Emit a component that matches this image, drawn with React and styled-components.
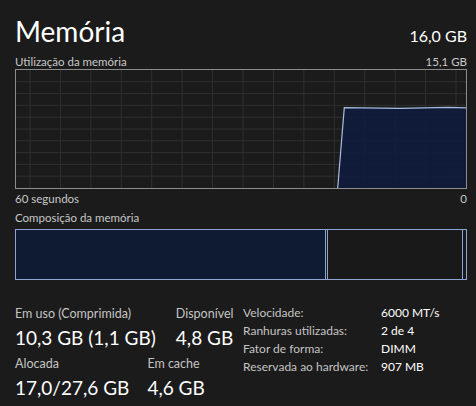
import styled, { createGlobalStyle } from 'styled-components'

const GlobalStyle = createGlobalStyle`
  html, body {
    margin: 0;
    background: #1b1b1b;
  }
  body {
    font-family: Lato, 'Open Sans', sans-serif;
    color: #ffffff;
  }
`

const Page = styled.div`
  width: 476px;
  height: 406px;
  box-sizing: border-box;
  padding: 12px 9px 0 15px;
  display: flex;
  flex-direction: column;
`

const Header = styled.div`
  display: flex;
  justify-content: space-between;
  align-items: baseline;
`

const Title = styled.h1`
  margin: 0;
  font-size: 28px;
  font-weight: 400;
  line-height: 38px;
`

const Total = styled.span`
  font-size: 16px;
`

const Caption = styled.div`
  display: flex;
  justify-content: space-between;
  font-size: 11.5px;
  line-height: 15px;
  color: #c8c8c8;
  margin-top: ${props => props.$top || 0}px;
`

const Graph = styled.div`
  height: 120px;
  box-sizing: border-box;
  border: 1px solid #8c8c8c;
  svg {
    display: block;
  }
`

const Bar = styled.div`
  display: flex;
  height: 51px;
  margin-top: 4px;
`

const Segment = styled.div`
  box-sizing: border-box;
  width: ${props => props.$w}px;
  flex: ${props => (props.$grow ? 1 : 'none')};
  border: 1px solid #8da4d4;
  border-left-width: ${props => (props.$first ? 1 : 0)}px;
  background: ${props => (props.$fill ? '#0f1a33' : '#191919')};
`

const Stats = styled.div`
  display: grid;
  grid-template-columns: 228px 1fr;
  margin-top: 26px;
`

const StatRow = styled.div`
  display: flex;
  gap: ${props => props.$spacing}px;
  margin-bottom: ${props => props.$gap || 0}px;
`

const Stat = styled.div`
  display: flex;
  flex-direction: column;
  white-space: nowrap;
`

const Label = styled.span`
  font-size: 12.5px;
  line-height: 16px;
  color: #c4c4c4;
`

const Value = styled.span`
  font-size: 19px;
  line-height: 32px;
`

const Specs = styled.div`
  display: grid;
  grid-template-columns: 138px auto;
  grid-auto-rows: 18px;
  font-size: 12px;
  line-height: 18px;
  margin-top: -2px;
  white-space: nowrap;
`

const SpecKey = styled.span`
  color: #c4c4c4;
`

const SpecValue = styled.span`
  color: #ffffff;
`

const hLines = Array.from({ length: 9 }, (_, i) => 11.8 * (i + 1))
const vLines = Array.from({ length: 15 }, (_, i) => 14 + 30.43 * i)

const UsageGraph = () => (
  <Graph>
    <svg width="450" height="118" viewBox="0 0 450 118">
      {hLines.map(y => (
        <line key={'h' + y} x1="0" x2="450" y1={y} y2={y} stroke="#303030" strokeWidth="1" />
      ))}
      {vLines.map(x => (
        <line key={'v' + x} x1={x} x2={x} y1="0" y2="118" stroke="#303030" strokeWidth="1" />
      ))}
      <polygon
        points="321.7,118 328.3,37.7 384,38.3 432,37.3 450,37.8 450,118"
        fill="#0e1c3c"
        fillOpacity="0.9"
      />
      <polyline
        points="321.7,118 328.3,37.7 384,38.3 432,37.3 450,37.8"
        fill="none"
        stroke="#a9bbe0"
        strokeWidth="1.2"
      />
    </svg>
  </Graph>
)

const specs = [
  ['Velocidade:', '6000 MT/s'],
  ['Ranhuras utilizadas:', '2 de 4'],
  ['Fator de forma:', 'DIMM'],
  ['Reservada ao hardware:', '907 MB'],
]

const App = () => (
  <Page>
    <GlobalStyle />
    <Header>
      <Title>Memória</Title>
      <Total>16,0 GB</Total>
    </Header>
    <Caption $top={4}>
      <span>Utilização da memória</span>
      <span>15,1 GB</span>
    </Caption>
    <UsageGraph />
    <Caption $top={2}>
      <span>60 segundos</span>
      <span>0</span>
    </Caption>
    <Caption $top={4}>
      <span>Composição da memória</span>
    </Caption>
    <Bar>
      <Segment $w={311} $fill $first />
      <Segment $w={2} />
      <Segment $grow />
      <Segment $w={4} />
    </Bar>
    <Stats>
      <div>
        <StatRow $spacing={20} $gap={2}>
          <Stat>
            <Label>Em uso (Comprimida)</Label>
            <Value>10,3 GB (1,1 GB)</Value>
          </Stat>
          <Stat>
            <Label>Disponível</Label>
            <Value>4,8 GB</Value>
          </Stat>
        </StatRow>
        <StatRow $spacing={18}>
          <Stat>
            <Label>Alocada</Label>
            <Value>17,0/27,6 GB</Value>
          </Stat>
          <Stat>
            <Label>Em cache</Label>
            <Value>4,6 GB</Value>
          </Stat>
        </StatRow>
      </div>
      <Specs>
        {specs.map(([k, v]) => (
          <>
            <SpecKey key={k}>{k}</SpecKey>
            <SpecValue key={k + 'v'}>{v}</SpecValue>
          </>
        ))}
      </Specs>
    </Stats>
  </Page>
)

export default App
